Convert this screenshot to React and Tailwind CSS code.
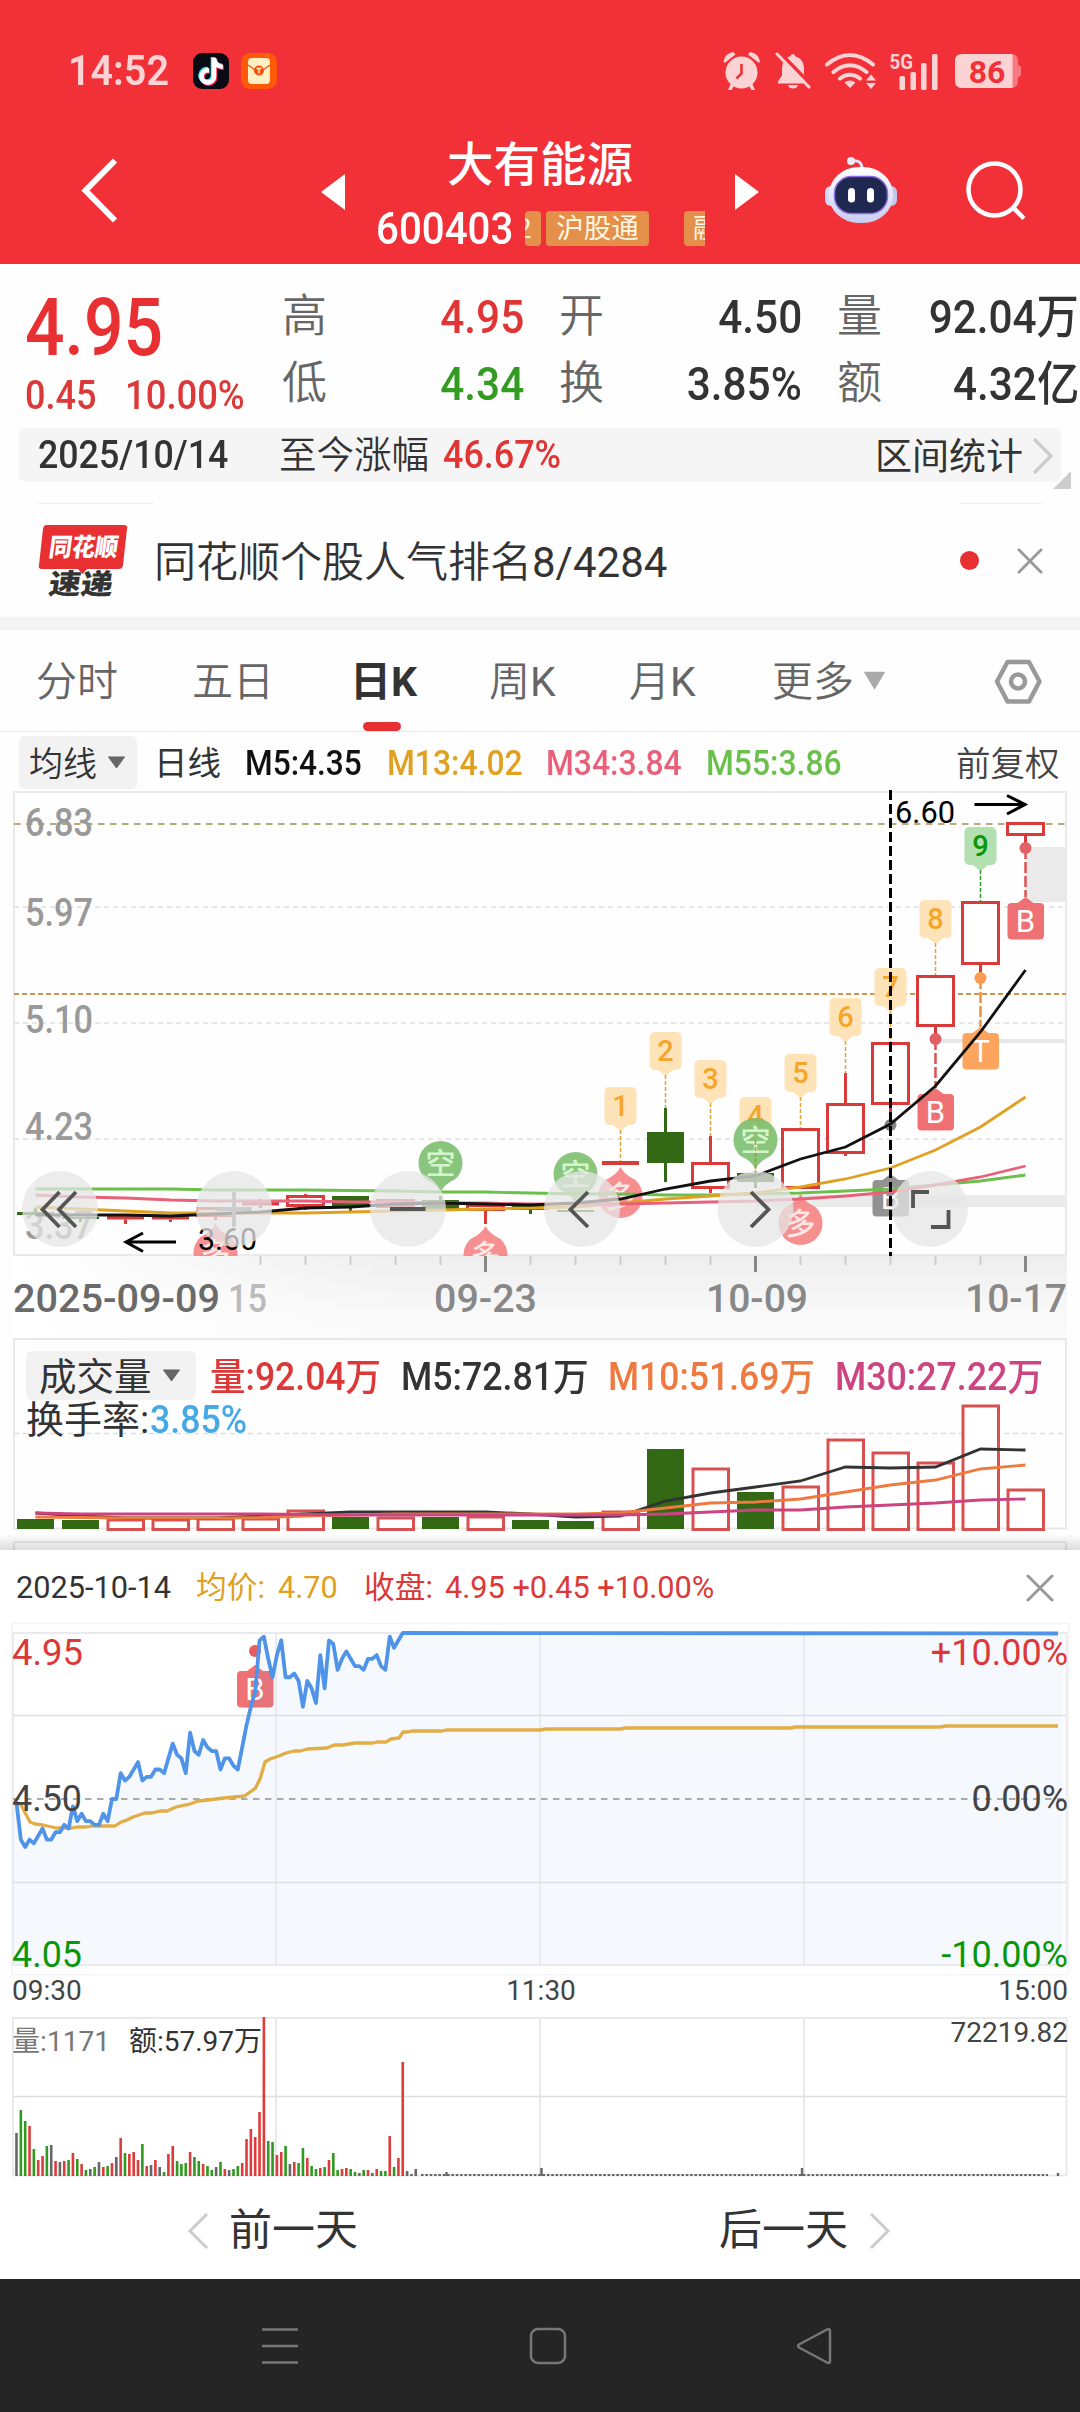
import { FaTiktok } from 'react-icons/fa';

const RED = '#d93a3a';
const GREEN = '#336815';

const quoteRows = [
  [
    { label: '高', value: '4.95', color: 'text-[#e03535]' },
    { label: '开', value: '4.50', color: 'text-[#333]' },
    { label: '量', value: '92.04万', color: 'text-[#333]' },
  ],
  [
    { label: '低', value: '4.34', color: 'text-[#339b22]' },
    { label: '换', value: '3.85%', color: 'text-[#333]' },
    { label: '额', value: '4.32亿', color: 'text-[#333]' },
  ],
];

// x centre of a daily candle
const cx = (i) => 35.5 + 45 * i;

// [open/close top, bottom, high, low, up]
const candles = [
  [1212, 1215, 1208, 1215, false],
  [1217, 1219, 1217, 1222, false],
  [1216, 1219.5, 1216, 1224, true],
  [1216, 1219.5, 1216, 1222, true],
  [1207, 1217, 1207, 1220, true],
  [1202, 1205.5, 1199, 1208, true],
  [1195, 1207, 1194, 1210, true],
  [1196, 1207, 1196, 1211, false],
  [1199, 1208, 1199, 1208, true],
  [1200, 1209, 1196, 1209, false],
  [1204, 1211, 1204, 1224, true],
  [1205, 1210, 1205, 1214, false],
  [1210, 1212, 1210, 1212, false],
  [1161, 1165, 1161, 1165, true],
  [1132, 1163, 1108, 1182, false],
  [1162, 1189, 1136, 1193, true],
  [1173, 1182, 1171, 1188, false],
  [1128, 1189, 1128, 1189, true],
  [1103, 1154, 1073, 1156, true],
  [1042, 1105, 1042, 1124, true],
  [975, 1027, 975, 1039, true],
  [901, 965, 901, 978, true],
  [822, 836, 822, 848, true],
];

const averages = [
  { color: '#6bbf4b', ys: [1189, 1189, 1189, 1189, 1190, 1190, 1190, 1190.5, 1191, 1192, 1192, 1193, 1194, 1194, 1195, 1195, 1194, 1193, 1191, 1189, 1185, 1181, 1175] },
  { color: '#e0a020', ys: [1207, 1209, 1211, 1213, 1213, 1213, 1213, 1212, 1211, 1210, 1209, 1208, 1207, 1203, 1199, 1196, 1193, 1187, 1179, 1168, 1150, 1127, 1097] },
  { color: '#e8607a', ys: [1195, 1197, 1198, 1200, 1201, 1201, 1201, 1202, 1202, 1203, 1203, 1204, 1204, 1204, 1203, 1202, 1201, 1199, 1196, 1192, 1185, 1177, 1166] },
  { color: '#111', ys: [1215, 1215, 1215, 1216, 1214, 1212, 1208, 1207, 1204, 1203, 1204, 1205, 1203, 1199, 1189, 1181, 1176, 1159, 1147, 1124, 1086, 1032, 970] },
];

const countBadges = [
  { n: 1, i: 13, top: 1087, end: 1162 },
  { n: 2, i: 14, top: 1032, end: 1108 },
  { n: 3, i: 15, top: 1060, end: 1136 },
  { n: 4, i: 16, top: 1097, end: 1171 },
  { n: 5, i: 17, top: 1054, end: 1128 },
  { n: 6, i: 18, top: 998, end: 1073 },
  { n: 7, i: 19, top: 968, end: 1042 },
  { n: 8, i: 20, top: 900, end: 976 },
  { n: 9, i: 21, top: 827, end: 901 },
];

const volumes = [1519, 1520, 1519, 1519, 1518, 1518, 1510, 1517, 1517, 1517, 1516, 1520, 1521, 1511, 1449, 1468, 1492, 1486, 1439, 1452, 1462, 1405, 1489];

const volumeLines = [
  { color: '#333', ys: [1513, 1516, 1518, 1518, 1518, 1516, 1514, 1512, 1512, 1512, 1512, 1514, 1517, 1516, 1501, 1493, 1487, 1481, 1467, 1468, 1467, 1449, 1450] },
  { color: '#ee7a40', ys: [1517, 1517.5, 1518, 1518, 1518, 1517.5, 1516, 1515, 1514, 1514, 1514, 1514, 1514, 1513, 1508, 1503, 1502, 1499, 1492, 1485, 1480, 1469, 1465] },
  { color: '#cc4480', ys: [1513, 1514, 1514, 1514, 1514, 1514, 1514.5, 1515, 1515, 1515, 1515, 1515, 1515, 1515, 1514, 1512, 1510, 1510, 1507, 1505, 1503, 1500, 1499] },
];

const prices = [
  4.49, 4.39, 4.37, 4.39, 4.38, 4.4, 4.42, 4.39, 4.39, 4.41, 4.41, 4.43, 4.42, 4.48, 4.44, 4.46, 4.44, 4.44, 4.43, 4.43,
  4.46, 4.44, 4.5, 4.5, 4.57, 4.55, 4.56, 4.58, 4.6, 4.55, 4.56, 4.56, 4.58, 4.58, 4.57, 4.61, 4.65, 4.62, 4.61, 4.57,
  4.68, 4.63, 4.62, 4.66, 4.64, 4.63, 4.63, 4.58, 4.61, 4.61, 4.59, 4.58, 4.64, 4.7, 4.75, 4.79, 4.93, 4.94, 4.88, 4.83,
  4.89, 4.93, 4.83, 4.83, 4.84, 4.82, 4.75, 4.82, 4.8, 4.76, 4.89, 4.8, 4.93, 4.92, 4.85, 4.88, 4.9, 4.88, 4.86, 4.86,
  4.85, 4.88, 4.88, 4.89, 4.86, 4.85, 4.94, 4.91, 4.93, 4.95,
];

const avgPoints =
  '16.5,1802 21,1805 30,1822 35,1824 43,1825 56,1828 72,1828 77,1827 86,1827 91,1826 115,1826 121,1822 127,1820 133,1817 145,1813 152,1813 160,1811 167,1811 176,1807 190,1804 198,1801 208,1800 224,1798 244.5,1796 255.5,1788 260,1779 265,1762 270,1759 279,1756 286,1753 294,1751 300,1751 307.5,1749 327,1748 334,1745 343,1745 355,1743 373,1743 377,1742 386,1742 391,1739 399,1738 403,1732 408,1732 411.5,1731 442.5,1731 446,1730 540,1730 546,1729 620,1729 626,1728 790,1728 796,1727 940,1727 946,1726 1058,1726';

// minute volume: bar height followed by r(ise), g(reen) or n(eutral)
const minuteVolumes =
  '43n 66g 55g 50r 27g 16r 20r 30g 31n 15r 14n 15r 16g 23r 17g 12r 6g 7n 9g 14n 9r 10g 13r 19n 38r 23g 22r 24r 16r 32g 10r 11n 16r 9n 4g 22r 30r 15g 12g 13g 24r 19g 15g 12r 10g 6g 9n 14g 7r 6n 7g 10g 13r 37r 47r 39r 64r 159r 35g 34g 21r 24r 30g 12n 14r 13g 28g 18r 10g 7g 8r 9g 16r 23g 6g 7r 8r 7g 4g 3n 6g 6r 3n 7r 5g 5g 40r 9g 18r 114r 5n 2n 7n'
    .split(' ')
    .map((s) => ({ h: parseInt(s, 10), c: s.slice(-1) }));

const minuteColors = { r: '#dd3c3c', g: '#2f9a1f', n: '#666' };

const mx = (i) => 16.5 + 4.34 * i;
const py = (p) => 1799 - (p - 4.5) * 369;

const linePoints = (ys) => ys.map((y, i) => `${cx(i)},${y}`).join(' ');

const Label = ({ x, y, w, size, color = '#999', weight = 400, children }) => (
  <text x={x} y={y} textLength={w} lengthAdjust="spacingAndGlyphs" fontSize={size} fontWeight={weight} fill={color}>
    {children}
  </text>
);

const Caret = ({ className }) => (
  <svg viewBox="0 0 20 14" preserveAspectRatio="none" className={className}>
    <path d="M1.5 1h17L10 13z" fill="currentColor" stroke="currentColor" strokeLinejoin="round" />
  </svg>
);

const Cross = ({ className }) => (
  <svg viewBox="0 0 28 28" className={className} stroke="#999" strokeWidth="3" strokeLinecap="round">
    <path d="M2 2l24 24M26 2L2 26" />
  </svg>
);

const TradeMark = ({ x, top, letter, color, opacity = 0.9 }) => (
  <g>
    <g fill={color} opacity={opacity}>
      <rect x={x - 18} y={top} width="36.5" height="36.5" rx="4" />
      <path d={`M${x - 8} ${top}L${x} ${top - 6}L${x + 8} ${top}z`} />
    </g>
    <text x={x} y={top + 29} textAnchor="middle" fontSize="31" fill="#fff">
      {letter}
    </text>
  </g>
);

const ShortPin = ({ x, y }) => (
  <g>
    <path d={`M${x - 15} ${y + 16}A22 22 0 1 1 ${x + 15} ${y + 16}Q${x + 4} ${y + 21} ${x} ${y + 29}Q${x - 4} ${y + 21} ${x - 15} ${y + 16}z`} fill="#7dbf70" opacity=".9" />
    <text x={x} y={y + 11} textAnchor="middle" fontSize="30" fontWeight="500" fill="#d3f5cc">空</text>
  </g>
);

const LongPin = ({ x, y }) => (
  <g>
    <path d={`M${x - 15} ${y - 16}A22 22 0 1 0 ${x + 15} ${y - 16}Q${x + 4} ${y - 21} ${x} ${y - 29}Q${x - 4} ${y - 21} ${x - 15} ${y - 16}z`} fill="#f57f7f" opacity=".88" />
    <text x={x} y={y + 11} textAnchor="middle" fontSize="30" fontWeight="500" fill="#ffe6e6">多</text>
  </g>
);

const StatusBar = () => (
  <div className="flex h-[70px] items-center">
    <span className="ml-[68px] w-[125px] text-[42px] font-semibold leading-[68px]">
      <span className="inline-block origin-left scale-x-[.94]">14:52</span>
    </span>
    <span className="flex h-9 w-9 items-center justify-center rounded-[9px] bg-[#0a0a14] text-white">
      <FaTiktok className="h-[27px] w-[24px] [filter:drop-shadow(-1px_-1px_0_#2ee)_drop-shadow(1px_1px_0_#f25)]" />
    </span>
    <svg viewBox="0 0 36 36" className="ml-3 h-9 w-9">
      <rect width="36" height="36" rx="9" fill="#ff5a0a" />
      <rect x="7" y="5" width="22" height="26" rx="4" fill="#fff0c4" />
      <path d="M7 12l7 5h8l7-5" fill="none" stroke="#e8500c" strokeWidth="1.2" />
      <circle cx="18" cy="17.5" r="5" fill="#f4500a" />
      <path d="M15.5 15.5h5M18 15.5v5" stroke="#fff0c4" strokeWidth="1.4" />
    </svg>

    {/* alarm, muted bell, wifi */}
    <svg viewBox="723 51 38 38" className="ml-[446px] h-[38px] w-[38px]" fill="currentColor">
      <circle cx="741.5" cy="71.5" r="16" />
      <path d="M723.5 60a12 12 0 0 1 10-9l2 2.5-11 8.500zM760 60a12 12 0 0 0-10-9l-2 2.500 11 8.500zM731 82l-3 7h3.500l3-5zM752 82l3 7h-3.500l-3-5z" />
      <path d="M741.500 63v9.500l-5 5" fill="none" stroke="#f23037" strokeWidth="2.600" />
    </svg>
    <svg viewBox="775 51 36 38" className="ml-[14px] h-[38px] w-9" fill="currentColor">
      <path d="M793 53q2 0 2.500 2.500 8 2 8.500 11v7l4 7v2h-30v-2l4-6v-8q.5-9 8.500-11.500 .5-2 2.500-2zM788 84h10q-1 3.500-5 3.500t-5-3.500z" />
      <path d="M779 51l34 35" stroke="#f23037" strokeWidth="4" />
      <path d="M777 53l32 33" stroke="currentColor" strokeWidth="3" strokeLinecap="round" />
    </svg>
    <svg viewBox="824 51 54 38" className="ml-[13px] h-[38px] w-[54px]" fill="none" stroke="currentColor">
      <path d="M827 63.500Q850 44.500 873 63.500M833.500 71Q850 57.500 866.500 71M840 77.500Q850 70 860 77.500" strokeWidth="4" strokeLinecap="round" />
      <path d="M844.500 81.500q5.500-4 11 0L850 87z" fill="currentColor" stroke="none" />
      <path d="M866 79.500h10L871 73.500zM866 82h10L871 88z" fill="currentColor" stroke="none" />
    </svg>
    <svg viewBox="889 50 50 39" className="ml-[11px] h-[39px] w-[50px] overflow-visible" fill="currentColor">
      <text x="889.500" y="67" fontSize="21" fontWeight="700" textLength="23.500" lengthAdjust="spacingAndGlyphs">5G</text>
      <rect x="899.500" y="74" width="5.500" height="14" rx="1.500" />
      <rect x="910.500" y="70" width="5.500" height="18" rx="1.500" />
      <rect x="921" y="61" width="5.500" height="27" rx="1.500" />
      <rect x="932" y="52" width="5.500" height="36" rx="1.500" />
    </svg>
    <svg viewBox="954 53 68 36" className="ml-[15px] h-9 w-[68px] overflow-visible">
      <path d="M1000 54h11q7 0 7 7v4q3 0 3 3v6q0 3-3 3v4q0 7-7 7h-11z" fill="#f87a80" />
      <path d="M962 54h50.500v34H962q-7 0-7-7V61q0-7 7-7z" fill="currentColor" />
      <text x="987" y="82.500" textAnchor="middle" fontSize="32" fontWeight="700" fill="#f23037">86</text>
    </svg>
  </div>
);

const Tag = ({ className, children }) => (
  <span className={`flex h-[35px] shrink-0 items-center rounded-[4px] bg-[#e48f4a] text-[27.5px] leading-[35px] text-[#fff6e0] ${className}`}>
    {children}
  </span>
);

const TitleBar = () => (
  <div className="flex h-[148px] items-center text-white">
    <svg viewBox="80 156 38 66" className="ml-20 h-[66px] w-[38px]" fill="none" stroke="currentColor" strokeWidth="6">
      <path d="M115 159.500L85.500 189.500L115 219.500" />
    </svg>
    <svg viewBox="0 0 24 36" className="ml-[203px] mt-1 h-9 w-6"><path d="M24 0v36L0 18z" fill="currentColor" /></svg>
    <div className="mt-[5px] w-[390px]">
      <h1 className="text-center text-[46.500px] font-medium leading-[62px]">大有能源</h1>
      <div className="mt-[10px] flex h-[46px] items-center pl-[31px]">
        <span className="w-[149px] text-[45px] font-medium leading-[46px]">
          <span className="inline-block origin-left scale-x-[.895]">600403</span>
        </span>
        <div className="flex w-[180px] overflow-hidden">
          <Tag className="w-4"><span className="-ml-[9px]">2</span></Tag>
          <Tag className="ml-[5px] w-[103px] justify-center">沪股通</Tag>
          <Tag className="ml-[35px] w-[103px] pl-[9px]">融</Tag>
        </div>
      </div>
    </div>
    <svg viewBox="0 0 24 36" className="mt-1 h-9 w-6"><path d="M0 0v36L24 18z" fill="currentColor" /></svg>
    <svg viewBox="825 156 72 67" className="ml-[66px] h-[67px] w-[72px]">
      <defs>
        <linearGradient id="shell" x1="0" y1="0" x2="0" y2="1">
          <stop offset="0" stopColor="#fff" />
          <stop offset="1" stopColor="#c9cdf0" />
        </linearGradient>
      </defs>
      <path d="M851 160q11-2 11 8" fill="none" stroke="#dfe2f7" strokeWidth="3" />
      <circle cx="851" cy="160" r="4" fill="#e9ebfa" />
      <rect x="825" y="185" width="12" height="20" rx="6" fill="#d5d9f5" />
      <rect x="885" y="185" width="12" height="20" rx="6" fill="#c3c8ee" />
      <rect x="829" y="166" width="64" height="56" rx="30" ry="27" fill="url(#shell)" />
      <rect x="834.500" y="175.500" width="53" height="37" rx="17" fill="#1e2850" stroke="#8a6ae0" strokeWidth="1.500" />
      <rect x="848" y="187" width="7" height="14.500" rx="3.500" fill="#fff" />
      <rect x="867" y="187" width="7" height="14.500" rx="3.500" fill="#fff" />
    </svg>
    <svg viewBox="966 160 62 62" className="ml-[69px] h-[62px] w-[62px]" fill="none" stroke="currentColor" strokeWidth="4.500">
      <circle cx="994.500" cy="190.500" r="26" />
      <path d="M1013 208.500L1024 219.500" />
    </svg>
  </div>
);

const Quote = () => (
  <div className="flex h-[164px]">
    <div className="w-[282px] pl-[25px] pt-[29px] text-[#e83033]">
      <div className="text-[80px] font-medium leading-[70px]">
        <span className="inline-block origin-left scale-x-[.87]">4.95</span>
      </div>
      <div className="mt-[13px] flex text-[40px] font-medium leading-[40px] text-[#dc3838]">
        <span className="w-[100px]"><span className="inline-block origin-left scale-x-[.9]">0.45</span></span>
        <span><span className="inline-block origin-left scale-x-[.91]">10.00%</span></span>
      </div>
    </div>
    <div className="pt-[19px]">
      {quoteRows.map((row) => (
        <div key={row[0].label} className="grid grid-cols-[242px_243px_242px] gap-x-[35px]">
          {row.map((q) => (
            <div key={q.label} className="flex justify-between leading-[67px]">
              <span className="w-[46px] shrink-0 text-[45px] font-[350] text-[#666]">{q.label}</span>
              <span className={`origin-right scale-x-[.9] whitespace-nowrap text-[47px] font-medium ${q.color}`}>{q.value}</span>
            </div>
          ))}
        </div>
      ))}
    </div>
  </div>
);

const RangeBar = () => (
  <div className="relative mx-[19px] flex h-[54px] items-center rounded-md bg-[#f5f5f5] leading-[54px] text-[#333]">
    <span className="ml-[19px] w-[241px] text-[38px] font-medium"><span className="inline-block origin-left scale-x-[.94]">2025/10/14</span></span>
    <span className="w-[164px] text-[37.500px] font-[350]">至今涨幅</span>
    <span className="text-[38px] font-medium text-[#e03535]"><span className="inline-block origin-left scale-x-[.945]">46.67%</span></span>
    <span className="absolute right-[38px] top-[3px] text-[37px]">区间统计</span>
    <svg viewBox="0 0 22 38" className="absolute right-[7px] top-[9px] h-[38px] w-[22px]" fill="none" stroke="#ccc" strokeWidth="3.500">
      <path d="M2 2l17 17L2 36" />
    </svg>
    <svg viewBox="0 0 18 18" className="absolute -bottom-[7px] -right-[10px] h-[18px] w-[18px]"><path d="M18 0v18H0z" fill="#ccc" /></svg>
  </div>
);

const News = () => (
  <div className="mt-[21px]">
    <div className="flex justify-between pl-[38px] pr-[38px]">
      <span className="h-px w-[115px] bg-[#eee]" />
      <span className="h-px w-[82px] bg-[#eee]" />
    </div>
    <div className="flex h-[113px] items-center">
      <svg viewBox="38 523 90 74" className="ml-[38px] h-[74px] w-[90px] overflow-visible">
        <path d="M47 524h77q4 0 3 4l-4 36q-.5 4-4 4H87l-4.500 5-4.500-5H42q-4 0-3-4l4-36q.5-4 4-4z" fill="#e83033" />
        <g fontWeight="900" transform="skewX(-8)">
          <text x="126" y="555" fontSize="25" fill="#fff" textLength="69" lengthAdjust="spacingAndGlyphs">同花顺</text>
          <text x="131" y="593" fontSize="28" fill="#333" textLength="64" lengthAdjust="spacingAndGlyphs">速递</text>
        </g>
      </svg>
      <span className="ml-[26px] mt-[4px] flex text-[42px] font-[350] leading-[60px] text-[#333]">
        同花顺个股人气排名<span className="font-normal">8/4284</span>
      </span>
      <span className="ml-auto h-[19px] w-[19px] rounded-full bg-[#e83033]" />
      <Cross className="ml-[38px] mr-[37px] h-[26px] w-[26px]" />
    </div>
    <div className="h-[13px] bg-[#f4f4f4]" />
  </div>
);

const Tabs = () => (
  <div className="flex h-[102px] items-center border-b border-[#e8e8e8] pt-[3px] text-[41px] font-[350] leading-[60px] text-[#666]">
    <span className="ml-[36px] w-[156px]">分时</span>
    <span className="w-[158px]">五日</span>
    <span className="relative w-[139px] font-bold text-[#333]">
      日K
      <span className="absolute -bottom-[19px] left-[13px] h-[9px] w-[38px] rounded-full bg-[#e83033]" />
    </span>
    <span className="w-[140px]">周<span className="font-normal">K</span></span>
    <span className="w-[143px]">月<span className="font-normal">K</span></span>
    <span>更多</span>
    <Caret className="-mt-[4px] ml-[9px] h-[19px] w-[23px] text-[#aaa]" />
    <svg viewBox="993 657 50 47" className="-mt-px ml-[107px] h-[47px] w-[50px]" fill="none" stroke="#999" strokeWidth="4.500" strokeLinejoin="round">
      <path d="M997 680.500L1007.500 661H1029L1039.500 680.500L1029 700.500H1007.500z" />
      <circle cx="1018" cy="680.500" r="7" />
    </svg>
  </div>
);

const AverageRow = () => (
  <div className="flex h-[58px] items-center pt-[5px] text-[35px] font-medium leading-[52px]">
    <span className="-mt-[2px] ml-[19px] flex h-[53px] w-[118px] items-center rounded-md bg-[#f2f2f2] pl-[10px] pt-[2px] text-[34px] font-[350] text-[#333]">
      均线
      <Caret className="-mt-[2px] ml-[10px] h-[13px] w-[19px] text-[#666]" />
    </span>
    <span className="ml-[17px] w-[91px] text-[33.500px] font-normal text-[#333]">日线</span>
    <span className="w-[142px] text-[#111]"><span className="inline-block origin-left scale-x-[.905]">M5:4.35</span></span>
    <span className="w-[159px] text-[#e0a020]"><span className="inline-block origin-left scale-x-[.91]">M13:4.02</span></span>
    <span className="w-[160px] text-[#e8607a]"><span className="inline-block origin-left scale-x-[.91]">M34:3.84</span></span>
    <span className="w-[250px] text-[#6bbf4b]"><span className="inline-block origin-left scale-x-[.91]">M55:3.86</span></span>
    <span className="whitespace-nowrap text-[34.500px] font-[350] text-[#444]">前复权</span>
  </div>
);

const CandleChart = () => (
  <svg viewBox="0 790 1080 555" className="block h-[555px] w-[1080px]">
    <defs>
      <linearGradient id="axisFade" x1="0" y1="0" x2="0" y2="1">
        <stop offset="0" stopColor="#eee" />
        <stop offset=".6" stopColor="#f8f8f8" />
        <stop offset="1" stopColor="#fbfbfb" />
      </linearGradient>
      <linearGradient id="axisLeft" x1="0" y1="0" x2="1" y2="0">
        <stop offset="0" stopColor="#fff" />
        <stop offset="1" stopColor="#fff" stopOpacity="0" />
      </linearGradient>
      <clipPath id="plot"><rect x="14" y="790" width="1053" height="466" /></clipPath>
    </defs>
    <rect x="14" y="1256" width="1053" height="89" fill="url(#axisFade)" />
    <rect x="14" y="1256" width="400" height="89" fill="url(#axisLeft)" />
    <rect x="14" y="792" width="1052" height="463" fill="#fefefe" stroke="#eaeaea" strokeWidth="2" />

    {/* unfilled gaps */}
    <rect x="1026" y="847" width="41" height="55" fill="#eaeaea" />
    <rect x="936" y="1039" width="131" height="4" fill="#e8e8e8" />
    <rect x="756" y="1195" width="311" height="12" fill="#ebebeb" />

    <g fill="none">
      <path d="M14 907H1066M14 1023H1066M14 1139H1066" stroke="#e0e0e0" strokeWidth="1.500" strokeDasharray="5 4" />
      <path d="M14 824H1066" stroke="#bba97c" strokeWidth="2" strokeDasharray="6.500 5.500" />
      <path d="M14 994H1066" stroke="#c9984f" strokeWidth="2" strokeDasharray="5 3" />
    </g>

    <Label x="25" y="836" w="68" size="38" weight="500">6.83</Label>
    <Label x="25" y="926" w="68" size="38" weight="500">5.97</Label>
    <Label x="25" y="1033" w="68" size="38" weight="500">5.10</Label>
    <Label x="25" y="1140" w="68" size="38" weight="500">4.23</Label>
    <Label x="25" y="1239" w="68" size="38" weight="500">3.37</Label>

    <g clipPath="url(#plot)">
      {countBadges.map(({ n, i, top, end }) => (
        <g key={n}>
          <g fill={n === 9 ? '#b2e0b0' : '#fee3b8'}>
            <rect x={cx(i) - 16} y={top} width="32" height="38" rx="5" />
            <path d={`M${cx(i) - 9} ${top + 37}h18l-9 7z`} />
          </g>
          <text x={cx(i)} y={top + 29} textAnchor="middle" fontSize="29" fontWeight="500" fill={n === 9 ? '#0a960a' : '#f5a528'}>
            {n}
          </text>
          <path d={`M${cx(i)} ${top + 43}V${end}`} stroke={n === 9 ? '#2a9a2a' : '#dca540'} strokeWidth="1.500" strokeDasharray="4 2" />
        </g>
      ))}

      {candles.map(([top, bottom, high, low, up], i) => {
        const hollow = up && bottom - top > 5;
        return (
          <g key={i} stroke={up ? RED : GREEN} strokeWidth="3">
            <path d={`M${cx(i)} ${high}V${top}M${cx(i)} ${bottom}V${low}`} />
            {hollow ? (
              <rect x={cx(i) - 18} y={top + 1.5} width="36" height={bottom - top - 3} fill="#fff" />
            ) : (
              <rect x={cx(i) - 18.5} y={top} width="37" height={bottom - top} fill={up ? RED : GREEN} stroke="none" />
            )}
          </g>
        );
      })}

      {/* links from traded candles to their marks */}
      <g fill="none" strokeWidth="2.500" strokeDasharray="11 3">
        <path d="M935.500 1039V1088M1025.500 848V897" stroke="#e05050" />
        <path d="M980.500 978V1027" stroke="#f0913f" />
      </g>
      <circle cx="935.500" cy="1039" r="6" fill="#e26066" />
      <circle cx="1025.500" cy="848" r="6" fill="#e26066" />
      <circle cx="980.500" cy="978" r="6" fill="#f99b50" />
      <circle cx="890.500" cy="1125" r="6" fill="#888" />
      <TradeMark x={935.5} top={1094} letter="B" color="#ee6266" />
      <TradeMark x={1025.5} top={903} letter="B" color="#ee6266" />
      <TradeMark x={980.5} top={1033} letter="T" color="#fd9c4e" />
      <TradeMark x={890.5} top={1180} letter="B" color="#888" />

      <ShortPin x={440.5} y={1163} />
      <ShortPin x={575.5} y={1174} />
      <ShortPin x={755.5} y={1140} />
      <path d="M755.500 1141V1171" stroke="#a89a30" strokeWidth="1.500" strokeDasharray="4 2" />
      <LongPin x={215.5} y={1253} />
      <LongPin x={485.5} y={1255} />
      <LongPin x={620.5} y={1196} />
      <LongPin x={800.5} y={1223} />

      {averages.map((a) => (
        <polyline key={a.color} points={linePoints(a.ys)} fill="none" stroke={a.color} strokeWidth="2.800" />
      ))}

      <path d="M890.500 790V1256" stroke="#000" strokeWidth="3" strokeDasharray="10 4" />
    </g>

    <g fill="none" stroke="#000" strokeWidth="3">
      <path d="M974.500 804.500H1024M1007 795.500L1025 804.500L1007 814" />
      <path d="M176 1242H127M143 1233L126 1242L143 1251.500" />
    </g>
    <Label x="895" y="823" w="60" size="31" color="#000">6.60</Label>
    <Label x="198" y="1250" w="59" size="31" color="#000">3.60</Label>

    {/* floating chart controls */}
    <g fill="#e6e6e6" opacity=".75">
      {[60, 234, 408, 582, 755.5, 930].map((x) => (
        <circle key={x} cx={x} cy="1209" r="38" />
      ))}
    </g>
    <g fill="none" stroke="#555" strokeWidth="3.800">
      <path d="M59.500 1192L42.500 1209.500L59.500 1227M76 1192L59 1209.500L76 1227" />
      <path d="M234 1191.500V1227M216.500 1209H251.500" stroke="#ccc" />
      <path d="M390 1209H425.500" />
      <path d="M588 1192L570.500 1209.500L588 1227" />
      <path d="M751 1192L768.500 1209.500L751 1227" />
      <path d="M929 1192H913V1208M931 1227H948.500V1210" />
    </g>

    {/* date axis */}
    {candles.map((c, i) =>
      i < 5 ? null : (
        <path
          key={i}
          d={`M${cx(i)} 1256V${i % 6 === 4 ? 1272 : 1265}`}
          stroke={i % 6 === 4 ? '#888' : '#ccc'}
          strokeWidth={i % 6 === 4 ? 3 : 2}
        />
      ),
    )}
    <Label x="13" y="1312" w="207" size="38" weight="500" color="#6a6a6a">2025-09-09</Label>
    <Label x="228" y="1312" w="39" size="38" weight="500" color="#bbb">15</Label>
    <Label x="434" y="1312" w="103" size="38" weight="500" color="#888">09-23</Label>
    <Label x="706" y="1312" w="102" size="38" weight="500" color="#888">10-09</Label>
    <Label x="965" y="1312" w="102" size="38" weight="500" color="#888">10-17</Label>
    <path d="M14 1345V1339H1066V1345" fill="none" stroke="#e8e8e8" strokeWidth="2" />
  </svg>
);

const VolumeChart = () => (
  <div className="relative h-[205px] w-[1080px]">
    <svg viewBox="0 1345 1080 205" className="absolute inset-0 h-[205px] w-[1080px]">
      <defs>
        <linearGradient id="sheetShadow" x1="0" y1="0" x2="0" y2="1">
          <stop offset="0" stopColor="#000" stopOpacity="0" />
          <stop offset="1" stopColor="#000" stopOpacity=".13" />
        </linearGradient>
      </defs>
      <path d="M14 1345V1528.500H1066V1345M14 1550V1542H1066V1550" fill="none" stroke="#e8e8e8" strokeWidth="2" />
      <path d="M14 1433.500H1066" stroke="#ddd" strokeWidth="1.500" strokeDasharray="5 4" />
      {volumes.map((top, i) =>
        candles[i][4] ? (
          <rect key={i} x={cx(i) - 17.5} y={top + 1} width="35.500" height={1528.5 - top} fill="#fff" stroke="#d95050" strokeWidth="3" />
        ) : (
          <rect key={i} x={cx(i) - 18.5} y={top} width="37" height={1529 - top} fill={GREEN} />
        ),
      )}
      {volumeLines.map((l) => (
        <polyline key={l.color} points={linePoints(l.ys)} fill="none" stroke={l.color} strokeWidth="2.800" />
      ))}
      <rect x="0" y="1534" width="1080" height="16" fill="url(#sheetShadow)" />
    </svg>
    <div className="relative flex pt-[8px] text-[38px] font-medium leading-[49px]">
      <span className="-mt-[2px] ml-[26px] flex h-[49px] w-[170px] items-center rounded-md bg-[#f2f2f2] pl-[13px] pt-[3px] text-[37.500px] font-normal text-[#333]">
        成交量
        <Caret className="-mt-[3px] ml-[10px] h-[13px] w-[19px] text-[#666]" />
      </span>
      <span className="ml-[14px] w-[191px] whitespace-nowrap text-[#dc3838]"><span className="inline-block origin-left scale-x-[.935]">量:92.04万</span></span>
      <span className="w-[207px] whitespace-nowrap text-[#333]"><span className="inline-block origin-left scale-x-[.94]">M5:72.81万</span></span>
      <span className="w-[227px] whitespace-nowrap text-[#ee7a40]"><span className="inline-block origin-left scale-x-[.935]">M10:51.69万</span></span>
      <span className="whitespace-nowrap text-[#cc4480]"><span className="inline-block origin-left scale-x-[.94]">M30:27.22万</span></span>
    </div>
    <div className="relative -mt-[5px] flex pl-[26px] text-[38px] leading-[46px] text-[#333]">
      <span className="w-[124px] whitespace-nowrap">换手率:</span>
      <span className="origin-left scale-x-[.94] font-medium text-[#45a9e8]">3.85%</span>
    </div>
  </div>
);

const line = prices.map((p, i) => `${mx(i)},${py(p)}`).join(' ') + ' 1058,1633.5';

const IntradayChart = () => (
  <svg viewBox="0 1622 1080 562" className="block h-[562px] w-[1080px]">
    <rect x="12" y="1623.500" width="1056.500" height="351" fill="none" stroke="#f4f4f4" strokeWidth="1.500" />
    <TradeMark x={255} top={1671} letter="B" color="#ee6266" />
    <circle cx="255" cy="1651" r="6" fill="#e85c5c" />
    <polygon points={`13,1799 ${line} 1063,1634 1063,1965 13,1965`} fill="#5b9df0" opacity=".06" />
    <g fill="none" stroke="#e8eaed" strokeWidth="2">
      <rect x="13" y="1633" width="1053.500" height="332" />
      <path d="M276 1633V1965M540 1633V1965M804 1633V1965" />
      <path d="M13 1715.500H1066M13 1882.500H1066" stroke="#dcdfe3" strokeWidth="1.500" />
      <path d="M13 1799H1066" stroke="#aaa" strokeDasharray="6.500 5.500" />
    </g>
    <polyline points={avgPoints} fill="none" stroke="#e2ad45" strokeWidth="3.300" strokeLinejoin="round" />
    <polyline points={line} fill="none" stroke="#4f94e8" strokeWidth="3.800" strokeLinejoin="round" />

    <Label x="12" y="1665" w="71" size="36" color="#dc3838">4.95</Label>
    <Label x="12" y="1811" w="70" size="36" color="#444">4.50</Label>
    <Label x="12" y="1967" w="70" size="36" color="#0a960a">4.05</Label>
    <g textAnchor="end" fontSize="36">
      <text x="1068" y="1665" fill="#dc3838">+10.00%</text>
      <text x="1068" y="1811" fill="#444">0.00%</text>
      <text x="1068" y="1967" fill="#0a960a">-10.00%</text>
    </g>
    <g fontSize="28" fill="#444">
      <text x="12" y="2000">09:30</text>
      <text x="541" y="2000" textAnchor="middle">11:30</text>
      <text x="1068" y="2000" textAnchor="end">15:00</text>
    </g>

    {/* minute volume */}
    <g fill="none" stroke="#eaeaea" strokeWidth="2">
      <rect x="13" y="2018" width="1053.500" height="157.500" />
      <path d="M276 2018V2175M540 2018V2175M804 2018V2175" />
      <path d="M13 2096.500H1066" stroke="#ddd" strokeWidth="1.500" />
    </g>
    {minuteVolumes.map((v, i) => (
      <rect key={i} x={mx(i) - 1.3} y={2176 - v.h} width="2.600" height={v.h} fill={minuteColors[v.c]} />
    ))}
    <path d="M421 2175H1048" stroke="#666" strokeWidth="2" strokeDasharray="2.600 1.740" />
    <path d="M446.500 2176v-4M541.500 2176v-8M802 2176v-8M1058 2176v-3" stroke="#666" strokeWidth="2.400" />
    <g fontSize="28">
      <Label x="12" y="2051" w="98" size="28" color="#777">量:1171</Label>
      <Label x="129" y="2051" w="133" size="28" color="#333">额:57.97万</Label>
      <text x="1068" y="2042" textAnchor="end" fill="#444">72219.82</text>
    </g>
  </svg>
);

const DayPanel = () => (
  <div className="h-[729px] bg-white">
    <div className="flex h-[72px] items-center pt-[3px] text-[30.700px] leading-[50px]">
      <span className="ml-[16px] w-[180px] text-[#333]">2025-10-14</span>
      <span className="w-[82px] text-[#e0a020]">均价:</span>
      <span className="w-[86px] text-[#e0a020]">4.70</span>
      <span className="w-[81px] text-[#dc3838]">收盘:</span>
      <span className="text-[#dc3838]">4.95 +0.45 +10.00%</span>
      <Cross className="ml-auto mr-[26px] h-7 w-7" />
    </div>
    <IntradayChart />
    <div className="flex h-[92px] items-center pt-px text-[43px] text-[#333]">
      <button className="ml-[187px] flex items-center">
        <svg viewBox="0 0 22 36" className="h-9 w-[22px]" fill="none" stroke="#ccc" strokeWidth="3"><path d="M20 1L3 18l17 17" /></svg>
        <span className="ml-[20px]">前一天</span>
      </button>
      <button className="ml-[361px] flex items-center">
        <span>后一天</span>
        <svg viewBox="0 0 22 36" className="ml-[21px] h-9 w-[22px]" fill="none" stroke="#ccc" strokeWidth="3"><path d="M2 1l17 17L2 35" /></svg>
      </button>
    </div>
  </div>
);

const SystemNav = () => (
  <div className="flex h-[133px] items-center bg-[#252525] text-[#777]">
    <svg viewBox="0 0 36 38" className="ml-[262px] h-[38px] w-9" stroke="currentColor" strokeWidth="2.500">
      <path d="M0 2.500h36M0 19h36M0 35.500h36" />
    </svg>
    <svg viewBox="0 0 38 38" className="ml-[231px] h-[38px] w-[38px]" fill="none" stroke="currentColor" strokeWidth="2.500">
      <rect x="2" y="2" width="34" height="34" rx="7" />
    </svg>
    <svg viewBox="0 0 36 38" className="ml-[229px] h-[38px] w-9" fill="none" stroke="currentColor" strokeWidth="2.500" strokeLinejoin="round">
      <path d="M31 2.500q3-1.500 3 2v29q0 3.500-3 2L3 20.500q-2-1.500 0-3z" />
    </svg>
  </div>
);

const App = () => {
  return (
    <div className="flex h-[2412px] w-[1080px] flex-col overflow-hidden bg-[#fefefe] font-['Roboto','Noto_Sans_CJK_SC',sans-serif] [&_svg]:shrink-0">
      <header className="h-[264px] bg-[#f23038] pt-9 text-[#fcd3d5]">
        <StatusBar />
        <div className="h-[10px]" />
        <TitleBar />
      </header>
      <Quote />
      <RangeBar />
      <News />
      <Tabs />
      <AverageRow />
      <CandleChart />
      <VolumeChart />
      <DayPanel />
      <SystemNav />
    </div>
  );
};

export default App;
